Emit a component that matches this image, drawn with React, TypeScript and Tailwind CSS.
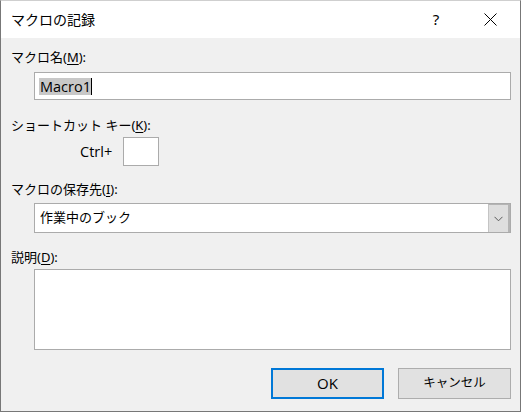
import React from "react";

const jp = { fontFamily: '"Noto Sans", "Noto Sans CJK JP", sans-serif' };
const latin = { fontFamily: '"Open Sans", "Noto Sans CJK JP", sans-serif' };

function Label({ text, accel }: { text: string; accel: string }) {
  return (
    <div className="h-[20px] leading-[20px] text-[13px] text-black pl-[10px] whitespace-pre">
      {text}(<span className="underline underline-offset-2">{accel}</span>):
    </div>
  );
}

function Chevron() {
  return (
    <svg width="9" height="6" viewBox="0 0 9 6" fill="none">
      <path d="M0.5 0.8 L4.5 4.8 L8.5 0.8" stroke="#5a5a5a" strokeWidth="1" />
    </svg>
  );
}

export default function App() {
  return (
    <div
      style={jp}
      className="w-[521px] h-[412px] flex flex-col bg-[#f0f0f0] border border-[#777777] border-t-[#cfcfcf] overflow-hidden"
    >
      {/* Title bar */}
      <div className="h-[37px] shrink-0 bg-white flex items-center pl-[10px]">
        <span className="text-[14px] text-black">マクロの記録</span>
        <div className="flex-1" />
        <span className="w-[20px] text-center text-[15px] text-black mr-[38px]">?</span>
        <svg width="13" height="13" viewBox="0 0 13 13" className="mr-[23px]">
          <path d="M0.5 0.5 L12.5 12.5 M12.5 0.5 L0.5 12.5" stroke="#000" strokeWidth="1" />
        </svg>
      </div>

      <div className="flex flex-col pr-[9px]">
        <div className="mt-[9px]">
          <Label text="マクロ名" accel="M" />
        </div>

        <div className="mt-[5px] ml-[33px] h-[28px] bg-white border border-[#ababab] flex items-center pl-[4px]">
          <span style={latin} className="bg-[#c8c8c8] text-[14.5px] leading-[17px] text-black pl-[1px]">Macro1</span>
          <span className="w-px h-[17px] bg-black" />
        </div>

        <div className="mt-[15px]">
          <Label text="ショートカット キー" accel="K" />
        </div>

        <div className="mt-[2px] h-[29px] flex items-center pl-[79px]">
          <span style={latin} className="text-[14.5px] text-black w-[43px]">Ctrl+</span>
          <div className="w-[36px] h-[29px] bg-white border border-[#ababab]" />
        </div>

        <div className="mt-[13px]">
          <Label text="マクロの保存先" accel="I" />
        </div>

        <div className="mt-[4px] ml-[33px] h-[30px] bg-white border border-[#ababab] flex items-stretch">
          <div className="flex-1 flex items-center pl-[5px] text-[13px] text-black">作業中のブック</div>
          <div className="w-[22px] bg-[#dedede] border-l border-[#c4c4c4] border-r-2 border-r-[#b4b4b4] border-t border-t-[#b4b4b4] flex items-center justify-center">
            <Chevron />
          </div>
        </div>

        <div className="mt-[14px]">
          <Label text="説明" accel="D" />
        </div>

        <div className="mt-[2px] ml-[33px] h-[81px] bg-white border border-[#ababab]" />

        <div className="mt-[18px] flex justify-end gap-[14px]">
          <button style={latin} className="w-[113px] h-[31px] bg-[#e1e1e1] border-2 border-[#0078d7] text-[15px] text-black">
            OK
          </button>
          <button className="w-[113px] h-[31px] bg-[#e1e1e1] border border-[#adadad] text-[12.5px] text-black">
            キャンセル
          </button>
        </div>
      </div>
    </div>
  );
}
